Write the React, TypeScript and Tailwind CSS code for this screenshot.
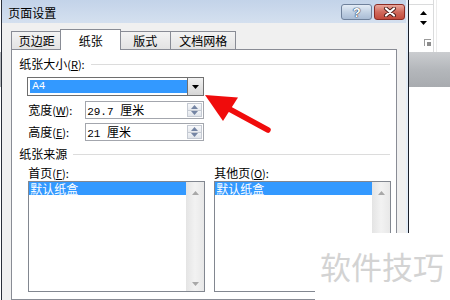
import React from 'react'

const Up = ({ c = '#000', w = 7 }: { c?: string; w?: number }) => (
  <svg width={w} height={4} viewBox="0 0 7 4" className="block"><path d="M3.5 0L7 4H0z" fill={c} /></svg>
)
const Down = ({ c = '#000', w = 7 }: { c?: string; w?: number }) => (
  <svg width={w} height={4} viewBox="0 0 7 4" className="block"><path d="M0 0h7L3.5 4z" fill={c} /></svg>
)

function Mn({ k }: { k: string }) {
  return <span className="text-[11px]">(<u>{k}</u>):</span>
}

function Tab({ label, w, active, cls = '' }: { label: string; w: string; active?: boolean; cls?: string }) {
  return active ? (
    <div className={`relative z-10 -mb-[1px] flex h-[21px] items-center justify-center border-x border-t border-[#898c95] bg-white pt-[1px] ${w} ${cls}`}>{label}</div>
  ) : (
    <div className={`flex h-[18px] items-center justify-center border-x border-t border-[#898c95] bg-gradient-to-b from-[#f3f3f3] to-[#e3e3e3] ${w} ${cls}`}>{label}</div>
  )
}

function Spin() {
  return (
    <div className="m-[1px] flex w-[15px] flex-col border border-[#c5cad3]">
      <div className="flex flex-1 items-center justify-center border-b border-[#c5cad3] bg-gradient-to-b from-[#f8f9fb] to-[#e6e9ee]"><Up c="#7484a3" w={7} /></div>
      <div className="flex flex-1 items-center justify-center bg-gradient-to-b from-[#f1f3f6] to-[#e0e4ea]"><Down c="#7484a3" w={7} /></div>
    </div>
  )
}

function SizeRow({ label, k, value, cls }: { label: string; k: string; value: string; cls: string }) {
  return (
    <div className={`ml-[16px] flex h-[18px] items-center ${cls}`}>
      <span className="w-[57px] leading-[14px]">{label}<Mn k={k} /></span>
      <div className="flex h-[18px] w-[119px] border border-[#a3a6ad] bg-white">
        <span className="flex-1 pl-[1px] leading-[16px]"><span className="font-['Liberation_Mono',monospace] text-[11px]">{value} </span>厘米</span>
        <Spin />
      </div>
    </div>
  )
}

function ListBox() {
  return (
    <div className="flex h-[111px] w-[177px] border border-[#828790] bg-white">
      <div className="flex-1">
        <div className="h-[13px] bg-[#3399ff] pl-[1px] leading-[13px] text-white">默认纸盒</div>
      </div>
      <div className="flex w-[18px] flex-col items-center justify-between bg-gradient-to-r from-[#e4e4e4] via-[#f2f2f2] to-[#e8e8e8] pb-[5px] pt-[9px]">
        <Up c="#a8a8a8" />
        <Down c="#a8a8a8" />
      </div>
    </div>
  )
}

export default function App() {
  return (
    <div className="relative flex h-[300px] w-[450px] overflow-hidden bg-white font-['Noto_Sans_CJK_SC',sans-serif] text-[12px] text-black">
      {/* dialog */}
      <div className="flex h-[300px] w-[409px] flex-none">
        <div className="flex w-[2px] flex-col bg-white"><div className="mt-[52px] h-[35px] bg-[#b3b6ba]" /></div>
        <div className="w-px bg-[#2a2f3a]" />
        <div className="flex flex-1 flex-col bg-[#f0f0f0]">
          <div className="flex h-[23px] items-start justify-between bg-gradient-to-b from-[#c3d3e9] to-[#d4e0ef]">
            <span className="ml-[6px] mt-[5px] leading-[16px]">页面设置</span>
            <div className="mr-[1px] mt-[4px] flex gap-[2px]">
              <div className="flex h-[16px] w-[31px] items-center justify-center rounded-[3px] border border-[#6f819b] bg-gradient-to-b from-[#e4ecf6] via-[#c3d2e4] to-[#a9bcd5] font-['Liberation_Sans',sans-serif] text-[13px] font-bold leading-none text-white [text-shadow:0_0_1px_#2c3e5c,0_0_1px_#2c3e5c,0_0_1px_#2c3e5c]">?</div>
              <div className="flex h-[16px] w-[31px] items-center justify-center rounded-[3px] border border-[#8a2b24] bg-gradient-to-b from-[#e9a79d] via-[#d06a5c] to-[#c24a3b]">
                <svg width="14" height="10" viewBox="0 0 14 10">
                  <path d="M3 1.5L11 8.5M11 1.5L3 8.5" stroke="#4a1d18" strokeWidth="4" strokeLinecap="round" />
                  <path d="M3 1.5L11 8.5M11 1.5L3 8.5" stroke="#fff" strokeWidth="2.2" strokeLinecap="round" />
                </svg>
              </div>
            </div>
          </div>
          <div className="flex flex-1 flex-col px-[9px] pt-[6px]">
            <div className="flex h-[20px] items-end">
              <Tab label="页边距" w="w-[51px]" />
              <Tab label="纸张" w="w-[61px]" active cls="-ml-[2px]" />
              <Tab label="版式" w="w-[52px]" cls="-ml-[2px]" />
              <Tab label="文档网格" w="w-[66px]" cls="-ml-[1px]" />
            </div>
            <div className="relative w-[386px] flex-1 border border-[#898c95] bg-white">
              <div className="mt-[6px] flex h-[16px] items-center pl-[7px] pr-[6px]">
                <span className="leading-[16px]">纸张大小<Mn k="R" /></span>
                <div className="ml-[6px] h-px flex-1 bg-[#dcdcdc]" />
              </div>
              <div className="ml-[15px] mt-[5px] flex h-[19px] w-[177px] border border-[#6e6e6e] bg-white">
                <div className="flex-1 p-[2px] pr-[1px]">
                  <div className="h-full bg-[#3399ff] pl-[2px] font-['Liberation_Mono',monospace] text-[11px] leading-[13px] text-white">A4</div>
                </div>
                <div className="flex w-[17px] items-center justify-center border border-[#707070] bg-gradient-to-b from-[#f2f2f2] to-[#d6d6d6] -m-[1px]">
                  <Down c="#000" />
                </div>
              </div>
              <SizeRow label="宽度" k="W" value="29.7" cls="mt-[5px]" />
              <SizeRow label="高度" k="E" value="21" cls="mt-[4px]" />
              <div className="mt-[5px] flex h-[16px] items-center pl-[7px] pr-[6px]">
                <span className="leading-[16px]">纸张来源</span>
                <div className="ml-[6px] h-px flex-1 bg-[#dcdcdc]" />
              </div>
              <div className="ml-[16px] mt-[4px] flex gap-[9px]">
                <div className="flex flex-col">
                  <span className="h-[15px] leading-[14px]">首页<Mn k="F" /></span>
                  <ListBox />
                </div>
                <div className="flex flex-col">
                  <span className="h-[15px] leading-[14px]">其他页<Mn k="O" /></span>
                  <ListBox />
                </div>
              </div>
            </div>
          </div>
        </div>
        <div className="w-[2px] bg-[#e4edf7]" />
        <div className="w-px bg-[#7cc6e8]" />
        <div className="w-px bg-[#1b1f29]" />
      </div>

      {/* background ribbon */}
      <div className="flex w-[41px] flex-none flex-col">
        <div className="flex h-[52px]">
          <div className="flex w-[25px] flex-col border-r border-[#dadbdc]">
            <div className="h-[5px] border-b border-[#dadbdc]" />
            <div className="ml-[11px] mt-[6px]"><Up /></div>
            <div className="ml-[11px] mt-[6px]"><Down /></div>
            <div className="ml-[15px] mt-[14px] h-[7px] w-[7px] border-l border-t border-[#9a9a9a]">
              <div className="ml-[2px] mt-[2px] h-[4px] w-[4px] bg-[#8c8c8c]" />
            </div>
          </div>
          <div className="ml-[2px] w-px bg-[#ececec]" />
        </div>
        <div className="h-[35px] bg-gradient-to-b from-[#cbcdd0] via-[#b4b7bb] to-[#a8abaf]" />
        <div className="flex-1 bg-white" />
      </div>

      {/* red annotation arrow */}
      <svg className="pointer-events-none absolute left-0 top-0" width="450" height="300" viewBox="0 0 450 300">
        <path d="M268 130L222 105" stroke="#f00c0c" strokeWidth="5.5" strokeLinecap="round" />
        <path d="M205 95L238 97.5L223 121z" fill="#f00c0c" />
      </svg>

      {/* watermark */}
      <div className="absolute left-[315px] top-[233px] h-[67px] w-[135px] bg-white pl-[5px] pt-[17px] text-[31px] leading-[31px] text-[#d3d3d3]">
        软件技巧
      </div>
    </div>
  )
}
